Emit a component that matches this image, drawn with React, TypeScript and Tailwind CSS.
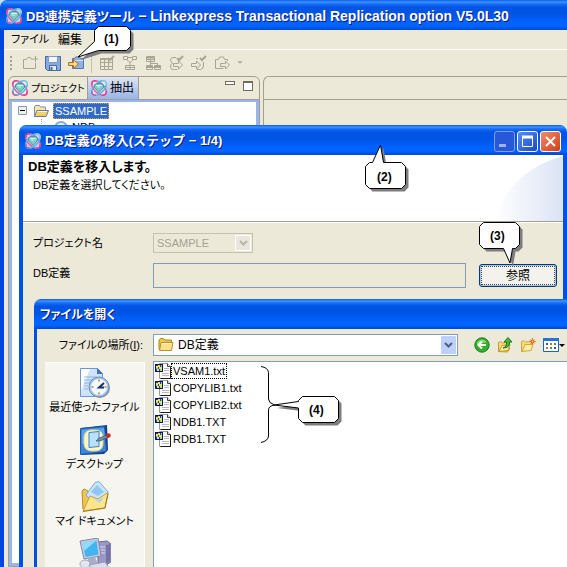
import type { ReactNode } from "react";

const FONT =
  "font-['Liberation_Sans','Noto_Sans_CJK_JP',sans-serif] [font-feature-settings:'palt']";
const TITLE =
  "bg-[linear-gradient(180deg,#0a5be6_0px,#3a94ff_2px,#1a6df8_4px,#0055e5_7px,#0054e3_14px,#0061fb_21px,#0066ff_26px,#0048d0_30px)] font-bold text-white [text-shadow:1px_1px_0_#0a1a80]";

function AppIcon() {
  return (
    <svg className="size-4 shrink-0" viewBox="0 0 16 16" fill="none" aria-hidden="true">
      <rect x="1" y="1" width="14" height="14" rx="4" fill="#e9f3f6" opacity=".8" />
      <ellipse cx="8" cy="8" rx="9" ry="5" transform="rotate(45 8 8)" stroke="#f4549c" strokeWidth="1.500" />
      <ellipse cx="8" cy="8" rx="9" ry="5" transform="rotate(-45 8 8)" stroke="#58b4ea" strokeWidth="1.500" />
      <path d="M1 5V3q0-2 2-2h2M11 15h2q2 0 2-2v-2" stroke="#e2338a" />
      <path d="M11 1h2q2 0 2 2v2" stroke="#9adcf5" />
      <path d="M1 11v2q0 2 2 2h2" stroke="#e2338a" />
      <path d="M3.500 5L6 3.500h4L12.500 5v2.500L8 12.500 3.500 7.500z" fill="#7fcbc8" stroke="#3f9aa0" />
      <path d="M5 5.500h6M6 7h3" stroke="#cff5ee" />
    </svg>
  );
}

const GREY = "#a9a594";

function ToolIcon({ children }: { children: ReactNode }) {
  return (
    <svg className="size-4" viewBox="0 0 16 16" fill="none" stroke={GREY} aria-hidden="true">
      {children}
    </svg>
  );
}

function ToolButton({ label, children }: { label: string; children: ReactNode }) {
  return (
    <button type="button" aria-label={label} className="shrink-0">
      <ToolIcon>{children}</ToolIcon>
    </button>
  );
}

function OpenFolder() {
  return (
    <svg className="h-4 w-4 shrink-0" viewBox="0 0 16 16" aria-hidden="true">
      <path d="M1.500 13V4l1-1.500h4l1 1.500h5v3" fill="#ffe9a0" stroke="#7a8fb8" />
      <path d="M1.500 13.500l2.500-6h11.500l-2.500 6z" fill="#f5cf62" stroke="#5c78ac" />
      <path d="M4.500 8.500h9.500" stroke="#fff6cc" />
    </svg>
  );
}

function ClosedFolder() {
  return (
    <svg className="h-4 w-4 shrink-0" viewBox="0 0 16 16" aria-hidden="true">
      <path d="M1 12.500V3l1.500-1.500h3L7 3h6.500v10z" fill="#efc64a" stroke="#b08a1c" />
      <path d="M1.500 13.500L3 6q0-.5 1-.5h11l-1.500 8z" fill="#fbe28a" stroke="#b8922a" />
      <path d="M4 6.500h9.500" stroke="#fff7cf" />
    </svg>
  );
}

function FileIcon() {
  return (
    <svg className="h-4 w-4 shrink-0" viewBox="0 0 16 16" aria-hidden="true">
      <path d="M4.500 .5h8l3 3v12h-11z" fill="#fff" stroke="#9a9a9a" />
      <path d="M15.500 3.500v12h-10" fill="none" stroke="#1c1c1c" />
      <path d="M12.500 .5v3h3" fill="#ddd" stroke="#444" />
      <path d="M9 5.500h5M9 7.500h5M7 10.500h7M7 12.500h7" stroke="#b9b9b9" />
      <path d="M0 1h8v8H0z" fill="#1a35d8" />
      <path d="M1 3h2v2H1zM3 2h2v2H3zM4 4h3v2H4zM2 6h2v2H2zM6 6h1v2H6z" fill="#ffe83a" />
      <path d="M1 5h2v1H1zM5 6h1v2H5zM6 2h1v2H6z" fill="#5fe0e0" />
      <path d="M.5 1.500h7v7h-7z" stroke="#0a0f5a" fill="none" />
    </svg>
  );
}

function RecentIcon() {
  return (
    <svg className="size-8" viewBox="0 0 32 32" aria-hidden="true">
      <path d="M1.500 1.500h17l5 5v23h-22z" fill="#cfe3fb" stroke="#6c97d4" />
      <path d="M2 2h9L2 24z" fill="#fff" />
      <path d="M18 1l6 6h-6z" fill="#3e72be" />
      <path d="M5 10h13M5 13h11M5 16h6M5 19h4M5 22h4" stroke="#8eb3e4" />
      <circle cx="21" cy="21" r="10" fill="#8e9bab" />
      <circle cx="20" cy="20" r="10" fill="#a9c8e8" stroke="#668fb8" />
      <circle cx="20" cy="20" r="7.500" fill="#f1faff" stroke="#fff" />
      <path d="M20 12.500v2M20 25.500v2M12.500 20h2M25.500 20h2" stroke="#e2653a" strokeWidth="1.500" />
      <path d="M25 16l-5 4.500h5" fill="none" stroke="#17345e" strokeWidth="2" />
    </svg>
  );
}

function DesktopIcon() {
  return (
    <svg className="size-8" viewBox="0 0 32 32" aria-hidden="true">
      <path d="M2 4l26-3 1 25-4 4-23 1z" fill="#153f86" />
      <path d="M1.500 4.500l24-2 2 25-26 3z" fill="#3c86dc" stroke="#1e58a8" />
      <path d="M3 6l22-2 1 10L3 20z" fill="#5ca5ee" />
      <rect x="5" y="6" width="19" height="21" rx="7" fill="#fdf6c9" stroke="#e2d58a" />
      <path d="M10 8.500l10-1v15l-10 1z" fill="#b9e1fb" stroke="#3a83cc" />
      <path d="M17 17l3-3 9-3 1 2-9 4z" fill="#6f8fb5" stroke="#34506f" strokeWidth=".7" />
      <circle cx="29.500" cy="11.500" r="2.200" fill="#d5291c" />
    </svg>
  );
}

function DocumentsIcon() {
  return (
    <svg className="size-8" viewBox="0 0 32 32" aria-hidden="true">
      <path d="M4 28L3 10l2-2 4 2 1 3 8 3-6 12z" fill="#eec657" stroke="#b98d24" />
      <path d="M7 14L16 1.500l4-1L29 11l-1 7-14 4z" fill="#c9e5fb" stroke="#7ba9d4" />
      <path d="M12 11l6-7 7 7-6 4z" fill="#93c6f2" />
      <path d="M4 30l7-15 8 3 10-6.500L26 27z" fill="#fbe58d" stroke="#c99d35" />
      <path d="M13 17l6 2 6-3-4 6z" fill="#a9d5f5" />
      <path d="M4 30.500l22-3.500 3-14" stroke="#a27717" fill="none" />
    </svg>
  );
}

function ComputerIcon() {
  return (
    <svg className="size-8" viewBox="0 0 32 32" aria-hidden="true">
      <path d="M19 4l9-1 4 3v18l-5 3-8-2z" fill="#9a98c4" stroke="#6a689c" />
      <path d="M27 7l4-1v17l-4 3z" fill="#7472a8" />
      <path d="M21 9h5M21 12h5M21 15h5" stroke="#dddcf2" />
      <path d="M1 3l18-3 3 18-17 3z" fill="#c6cbe0" stroke="#8288ab" />
      <path d="M3.500 5l14-2.500 2 14L6.500 19z" fill="#42b4ee" />
      <path d="M3.500 5l14-2.500L5 13z" fill="#8fdcfb" />
      <path d="M9 20l7-1 3 7-10 2z" fill="#abaecb" />
      <ellipse cx="6" cy="26" rx="5" ry="4" fill="#e4e5ef" stroke="#a5a7bf" />
      <path d="M10 27l16-3 4 6-14 3z" fill="#dcdeec" stroke="#9b9ebb" />
    </svg>
  );
}

const files = ["VSAM1.txt", "COPYLIB1.txt", "COPYLIB2.txt", "NDB1.TXT", "RDB1.TXT"];

const places = [
  { label: "最近使ったファイル", Icon: RecentIcon },
  { label: "デスクトップ", Icon: DesktopIcon },
  { label: "マイ ドキュメント", Icon: DocumentsIcon },
];

function CaptionButton({ label, tone, children }: { label: string; tone: string; children: ReactNode }) {
  return (
    <button
      type="button"
      aria-label={label}
      className={`flex size-[21px] items-center justify-center rounded-[3px] border ${tone}`}
    >
      <svg className="size-[17px]" viewBox="0 0 17 17" fill="none" aria-hidden="true">
        {children}
      </svg>
    </button>
  );
}

function Callout({
  place,
  pad,
  path,
  label,
  width,
  height,
}: {
  place: string;
  pad: string;
  path: string;
  label: string;
  width: number;
  height: number;
}) {
  return (
    <div className={`pointer-events-none absolute z-30 ${place}`}>
      <svg width={width} height={height} viewBox={`0 0 ${width} ${height}`} aria-hidden="true">
        <path d={path} fill="#7d7d7d" transform="translate(3 3)" />
        <path d={path} fill="#fff" stroke="#000" />
      </svg>
      <span className={`absolute text-[12px] leading-4 font-bold text-black ${pad}`}>{label}</span>
    </div>
  );
}

function MainWindow() {
  return (
    <div className="flex h-full flex-col">
      <header className={`flex h-[30px] shrink-0 items-center gap-1 rounded-tl-[7px] px-[6px] pt-[2px] text-[13px] whitespace-nowrap ${TITLE}`}>
        <AppIcon />
        <h1>
          DB連携定義ツール <span className="text-[14px]">− Linkexpress Transactional Replication option V5.0L30</span>
        </h1>
      </header>
      <div className="flex min-h-0 flex-1 flex-col border-l-4 border-[#0046dc] bg-[#ece9d8]">
        <nav className="flex h-5 shrink-0 items-center gap-[9px] border-b border-white px-[7px] text-[12px]">
          <button type="button" className="text-[11px]">ファイル</button>
          <button type="button">編集</button>
        </nav>
        <div className="flex h-[26px] shrink-0 items-center gap-[7px] pl-[6px]">
          <span className="h-[14px] w-[2px] bg-[repeating-linear-gradient(180deg,#a5a291_0px,#a5a291_2px,transparent_2px,transparent_4px)]" />
          <div className="flex items-center gap-[7px] pl-[3px]">
            <ToolButton label="新規">
              <path d="M10.500 4.500h-1l-1-2h-3l-1 2h-3v9h12V8M13.500 1v6M10.500 4h6" />
            </ToolButton>
            <ToolButton label="保存">
              <path d="M.5 1.500h15v14h-13l-2-2z" fill="#86a9e0" stroke="#47689f" />
              <path d="M3.500 1.500h9v6h-9z" fill="#f2f5fb" stroke="#7f9ac5" />
              <path d="M4.500 10.500h7v5h-7z" fill="#e4ebf7" stroke="#47689f" />
              <path d="M6.500 12v3" stroke="#47689f" strokeWidth="2" />
            </ToolButton>
            <ToolButton label="移入">
              <path d="M4.500 13.500V3.500h2l1-1.500h4l1 1.500h3v10z" fill="#8fb2e6" stroke="#5276b4" />
              <path d="M6 5.500h9" stroke="#d3e3fb" />
              <path d="M.5 7.500h5v-3l5 4.500-5 4.500v-3h-5z" fill="#ffd98a" stroke="#b36f12" />
            </ToolButton>
          </div>
          <span className="h-5 w-px bg-[#c5c2b2]" />
          <ToolButton label="表の確認">
            <path d="M1.500 3.500h12v11h-12zM1.500 7.500h12M1.500 11.500h12M5.500 3.500v11M9.500 3.500v11M1.500 4.500h7" />
            <path d="M9 3l2 2 4-4" strokeWidth="2" />
          </ToolButton>
          <ToolButton label="結合">
            <path d="M1.500 1.500h4v3h-4zM10.500 1.500h4v3h-4zM4.500 4.500l3.500 3 3.500-3M5.500 2.500h5M8 7.500v3M3.500 10.500h9v4h-9zM3.500 12.500h9M8 10.500v4" />
          </ToolButton>
          <ToolButton label="分割">
            <path d="M1.500 1.500h8v5h-8zM1.500 4.500h8M5.500 4v6M5.500 8.500h7v2M1.500 10.500h6v4h-6zM9.500 10.500h6v4h-6zM1.500 12.500h14" />
            <path d="M2 2h7v1H2zM2 11h5v1H2zM10 11h5v1h-5z" fill={GREY} />
          </ToolButton>
          <ToolButton label="抽出確認">
            <path d="M8 2.500H5Q2.500 3 2.500 5t2 3Q2.500 9 2.500 12t4 2.500h3M5.500 8.500h5V6l4 4-4 4v-2.500h-5z" />
            <path d="M9 3l2 2 4-4" strokeWidth="2" />
          </ToolButton>
          <ToolButton label="格納確認">
            <path d="M7 3.500h-2M12.500 7v4q0 3-3 3.500H6M.5 8.500h5V6l4 4-4 4v-2.500h-5z" />
            <path d="M9 3l2 2 4-4" strokeWidth="2" />
          </ToolButton>
          <ToolButton label="移出">
            <path d="M13.500 6V4.500h-3L9.500 2h-4l-1 2.500h-3v9h8M6.500 8.500h5V6l4 4-4 4v-2.500h-5z" />
          </ToolButton>
          <svg className="h-[4px] w-[6px]" viewBox="0 0 6 4" aria-hidden="true">
            <path d="M0 0h6L3 3z" fill="#bcb8a7" />
          </svg>
        </div>
        <div className="flex min-h-0 flex-1 gap-[3px] pl-1">
          <section className="flex w-[252px] shrink-0 flex-col rounded-t-[6px] border border-[#a19f8f]">
            <div className="flex h-[23px] shrink-0 items-stretch border-b border-[#a19f8f] text-[12px]" role="tablist">
              <button type="button" role="tab" aria-selected="false" className="flex w-[78px] items-center gap-[3px] pl-[3px] whitespace-nowrap">
                <AppIcon />
                <span className="text-[10px]">プロジェクト</span>
              </button>
              <button type="button" role="tab" aria-selected="true" className="flex w-[52px] items-center gap-[3px] border-x border-[#a19f8f] bg-linear-to-b from-[#dfe6f2] to-[#99b4ea] pl-[3px]">
                <AppIcon />
                <span>抽出</span>
              </button>
              <div className="ml-auto flex gap-2 pt-1 pr-[6px]">
                <button type="button" aria-label="最小化" className="h-1 w-[10px] border border-[#6f6c5c] bg-white" />
                <button type="button" aria-label="最大化" className="h-[10px] w-[10px] border border-t-2 border-[#6f6c5c] bg-white" />
              </div>
            </div>
            <ul className="flex-1 border-3 border-t-2 border-[#9ab5ee] bg-white pl-[6px] text-[11px]" role="tree">
              <li role="treeitem" aria-expanded="true">
                <div className="flex h-[17px] items-center gap-[6px]">
                  <span className="flex size-[9px] items-center justify-center rounded-[1px] border border-[#7b98b5] bg-[#f2f0e8]">
                    <span className="h-px w-[5px] bg-black" />
                  </span>
                  <OpenFolder />
                  <span className="-ml-[2px] border border-dotted border-[#e0a040] bg-[#316ac5] px-px leading-[14px] text-white">SSAMPLE</span>
                </div>
                <ul>
                  <li role="treeitem" className="ml-[23px] flex h-[17px] items-center gap-1 border-l border-dotted border-[#a0a0a0] pl-[12px]">
                    <span className="size-[14px] rounded-full border-2 border-[#8fa9cc] bg-[#edf3fb]" />
                    NDB
                  </li>
                </ul>
              </li>
            </ul>
          </section>
          <section className="flex-1 rounded-tl-[6px] border-t border-l border-[#a19f8f]">
            <div className="h-[23px] border-b border-[#a19f8f]" />
          </section>
        </div>
      </div>
    </div>
  );
}

function ImportWizard() {
  return (
    <div className="absolute top-[125px] right-0 bottom-0 left-[19px] flex flex-col">
      <header className={`flex h-[30px] shrink-0 items-center gap-1 rounded-t-[7px] pr-[6px] pl-[6px] pt-[2px] text-[13px] whitespace-nowrap ${TITLE}`}>
        <AppIcon />
        <h2 className="[font-feature-settings:normal]">DB定義の移入(ステップ − 1/4)</h2>
        <div className="ml-auto flex gap-[2px]">
          <CaptionButton label="最小化" tone="border-[#7f9ff0] bg-[#2858d8]">
            <path d="M3 12.500h7" stroke="#9db4f2" strokeWidth="3" />
          </CaptionButton>
          <CaptionButton label="最大化" tone="border-white bg-linear-to-br from-[#5b8bf5] to-[#1748cc]">
            <path d="M3.500 4v9.500h10V4" stroke="#fff" />
            <path d="M3 4h11" stroke="#fff" strokeWidth="3" />
          </CaptionButton>
          <CaptionButton label="閉じる" tone="border-white bg-linear-to-br from-[#f08a68] to-[#cf3a12]">
            <path d="M4 4l9 9M13 4l-9 9" stroke="#fff" strokeWidth="2" />
          </CaptionButton>
        </div>
      </header>
      <div className="flex min-h-0 flex-1 flex-col border-x-4 border-[#0050e6] bg-[#ece9d8]">
        <div className="relative h-[67px] shrink-0 overflow-hidden border-b border-[#a19f8f] bg-white px-[5px] pt-[3px]">
          <svg className="absolute top-0 right-0" width="68" height="66" viewBox="0 0 68 66" aria-hidden="true">
            <defs>
              <linearGradient id="swoosh" x1="0" x2="1">
                <stop offset="0" stopColor="#fff" />
                <stop offset="1" stopColor="#dbe3f4" />
              </linearGradient>
            </defs>
            <path d="M0 66Q14 16 68 1v65z" fill="url(#swoosh)" />
            <path d="M0 66Q28 24 68 20v46z" fill="url(#swoosh)" />
          </svg>
          <p className="text-[13px] leading-[18px] font-bold">DB定義を移入します。</p>
          <p className="pl-[5px] text-[11px] leading-[18px]">DB定義を選択してください。</p>
        </div>
        <form className="grid grid-cols-[120px_1fr_78px] items-center gap-y-[10px] border-t border-white pt-[10px] pr-[6px] pl-[10px] text-[11px]">
          <label htmlFor="project" className="self-start leading-[20px]">プロジェクト名</label>
          <div className="relative w-[100px]">
            <select id="project" disabled className="block h-5 w-full appearance-none border border-[#c5c2b0] bg-transparent pl-[3px] text-[11px] leading-4 text-[#a5a292] opacity-100">
              <option>SSAMPLE</option>
            </select>
            <span className="pointer-events-none absolute top-[2px] right-[2px] flex h-4 w-4 items-center justify-center border border-white bg-[#e9e6dc]">
              <svg className="h-[6px] w-[9px]" viewBox="0 0 9 6" fill="none" aria-hidden="true">
                <path d="M1 1l3.500 3.500L8 1" stroke="#b9b6a8" strokeWidth="2" />
              </svg>
            </span>
          </div>
          <span />
          <label htmlFor="dbdef" className="self-start leading-[20px]">DB定義</label>
          <input id="dbdef" readOnly className="mr-[13px] h-[25px] border border-[#7f9db9] bg-transparent px-1" />
          <button type="button" className="h-[23px] rounded-[3px] border border-[#003c74] bg-[#a9c0ee] p-px">
            <span className="flex h-full items-center justify-center border border-dotted border-[#444] bg-[#f3f2ec] text-[12px]">参照</span>
          </button>
        </form>
      </div>
    </div>
  );
}

function FileDialog() {
  return (
    <div className="absolute top-[299px] right-0 bottom-0 left-[34px] flex flex-col">
      <header className={`flex h-[30px] shrink-0 items-center rounded-tl-[7px] px-[6px] pt-[2px] text-[12px] ${TITLE}`}>
        <h2>ファイルを開く</h2>
      </header>
      <div className="flex min-h-0 flex-1 flex-col border-l-3 border-[#0050e6] bg-[#ece9d8]">
        <div className="flex h-[32px] shrink-0 items-center text-[11px]">
          <label htmlFor="location" className="w-[116px] pr-[10px] text-right whitespace-nowrap">
            ファイルの場所(<u>I</u>):
          </label>
          <div className="relative flex-1">
            <select id="location" className="block h-[22px] w-full appearance-none border border-[#7f9db9] bg-white pl-6 text-[12px] leading-5 text-black">
              <option>DB定義</option>
            </select>
            <span className="pointer-events-none absolute top-[3px] left-[5px]">
              <ClosedFolder />
            </span>
            <span className="pointer-events-none absolute top-[2px] right-[2px] flex h-[18px] w-[15px] items-center justify-center rounded-[1px] bg-[#bfd0f8]">
              <svg className="h-[6px] w-[9px]" viewBox="0 0 9 6" fill="none" aria-hidden="true">
                <path d="M1 1l3.500 3.500L8 1" stroke="#4d6185" strokeWidth="2" />
              </svg>
            </span>
          </div>
          <div className="flex items-center gap-[7px] pr-[2px] pl-4">
            <button type="button" aria-label="戻る">
              <svg className="size-4" viewBox="0 0 16 16" fill="none" aria-hidden="true">
                <circle cx="8" cy="8" r="7.200" fill="#35ad2b" stroke="#1d7c1a" />
                <path d="M3 5q5-5 10 0-5 1-10 3z" fill="#83d873" />
                <path d="M12 8H5M8 4.500L4.500 8 8 11.500" stroke="#fff" strokeWidth="2" />
              </svg>
            </button>
            <button type="button" aria-label="上のフォルダへ">
              <svg className="size-4" viewBox="0 0 16 16" aria-hidden="true">
                <path d="M1.500 14.500v-9l2-1 2 1.500 6-1 1 7-2 3z" fill="#f8dc7b" stroke="#c39a2d" />
                <path d="M2 14.500l3-6 8-1-2 6z" fill="#fdeca4" stroke="#c39a2d" />
                <path d="M6 11q4-1 3.500-6H7l4-4.500L15 5h-2.500q.5 6-6.500 6z" fill="#49b83c" stroke="#1d7422" />
              </svg>
            </button>
            <button type="button" aria-label="新しいフォルダ">
              <svg className="size-4" viewBox="0 0 16 16" fill="none" aria-hidden="true">
                <path d="M1.500 14.500v-10l2-1 2 1.500 6-1v8z" fill="#f8dc7b" stroke="#d0a83c" />
                <path d="M2 14.500l3-7h8l-2 6z" fill="#fdeca4" stroke="#d0a83c" />
                <path d="M12.500 1v7M9 4.500h7M10.500 2.500l4 4M14.500 2.500l-4 4" stroke="#f0813c" />
                <circle cx="12.500" cy="4.500" r="2" fill="#e8502a" />
                <circle cx="12.500" cy="4.500" r="1" fill="#ffd84a" />
              </svg>
            </button>
            <button type="button" aria-label="表示" className="flex items-center">
              <svg className="h-[14px] w-4" viewBox="0 0 16 14" aria-hidden="true">
                <path d="M.5.5h15v13H.5z" fill="#fff" stroke="#1b62c8" />
                <path d="M0 0h16v3H0z" fill="#2472dc" />
                <path d="M3 5h2v2H3zM11 9h2v2h-2z" fill="#37518f" />
                <path d="M7 5h2v2H7zM3 9h2v2H3z" fill="#d2644a" />
                <path d="M11 5h2v2h-2zM7 9h2v2H7z" fill="#3a9a48" />
              </svg>
              <svg className="h-[3px] w-[6px]" viewBox="0 0 6 3" aria-hidden="true">
                <path d="M0 0h6L3 3z" />
              </svg>
            </button>
          </div>
        </div>
        <div className="flex min-h-0 flex-1">
          <ul className="mt-px mr-2 ml-2 flex w-[100px] shrink-0 flex-col gap-[9px] overflow-hidden border-t border-r border-white bg-[#f6f5ef] pt-1 text-[11px]">
            {places.map(({ label, Icon }) => (
              <li key={label}>
                <button type="button" className="flex w-full flex-col items-center leading-4 whitespace-nowrap">
                  <Icon />
                  {label}
                </button>
              </li>
            ))}
            <li>
              <button type="button" aria-label="マイ コンピュータ" className="flex w-full flex-col items-center">
                <ComputerIcon />
              </button>
            </li>
          </ul>
          <ul className="flex-1 border-t border-l border-[#7f9db9] bg-white pl-px text-[11px]">
            {files.map((name, i) => (
              <li key={name} className="h-[17px]">
                <button type="button" className="flex h-[17px] items-center">
                  <FileIcon />
                  <span className={i === 0 ? "border border-dotted border-black px-px leading-[14px]" : "border border-transparent px-px leading-[14px]"}>
                    {name}
                  </span>
                </button>
              </li>
            ))}
          </ul>
        </div>
      </div>
    </div>
  );
}

export default function App() {
  return (
    <main className={`relative h-screen overflow-hidden bg-[#c9dcf8] text-black ${FONT}`}>
      <MainWindow />
      <ImportWizard />
      <FileDialog />
      <Callout
        place="top-[26px] left-[77px]"
        pad="top-[5px] left-[27px]"
        label="(1)"
        width={58}
        height={36}
        path="M21.500.5h28l4 4v16l-4 4h-28L1 31 17.500 15.500v-11z"
      />
      <Callout
        place="top-[144px] left-[365px]"
        pad="top-[25px] left-[12px]"
        label="(2)"
        width={46}
        height={50}
        path="M4.500 18.500h3L15.500 1l3 17.500h18l4 4v18l-4 4h-32l-4-4v-18z"
      />
      <Callout
        place="top-[222px] right-[43px]"
        pad="top-[6px] left-[11px]"
        label="(3)"
        width={45}
        height={44}
        path="M4.500.5h32l4 4v18l-4 4h-3L31 41 24.500 26.500h-20l-4-4v-18z"
      />
      <svg className="pointer-events-none absolute top-[366px] left-[260px]" width="16" height="78" viewBox="0 0 16 78" fill="none" stroke="#000" aria-hidden="true">
        <path d="M1 .5q7 1 7.500 6V33q0 4 6 6-6 1-6 5v26q-.5 5-7.500 6.500" />
      </svg>
      <Callout
        place="top-[396px] left-[273px]"
        pad="top-[6px] left-[36px]"
        label="(4)"
        width={70}
        height={32}
        path="M29.500.5h32l4 4v18l-4 4h-32l-4-4v-10.500L1 9 25.500 5.500v-1z"
      />
    </main>
  );
}
